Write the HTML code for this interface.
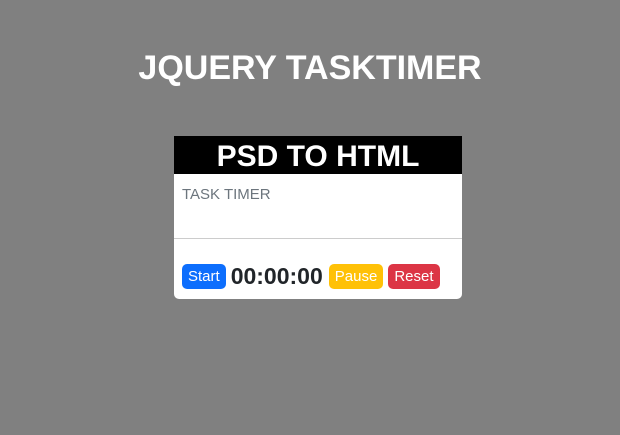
<!DOCTYPE html>
<html><head><style>
body{margin:0;width:620px;height:435px;background:#808080;font-family:"Liberation Sans",sans-serif;position:relative;overflow:hidden}
h1{position:absolute;top:46px;left:0;width:620px;text-align:center;margin:0;color:#fff;font-size:34px;font-weight:bold;line-height:44px}
.card{position:absolute;left:174px;top:136px;width:288px;height:163px;background:#fff;border-radius:0 0 5px 5px}
.hd{height:38px;background:#000;color:#fff;text-align:center;font-size:30px;font-weight:bold;line-height:42px}
.lbl{position:absolute;left:8px;top:50px;color:#6c757d;font-size:15px}
.hr{position:absolute;left:0;right:0;top:102px;border-top:1px solid #ccc}
.row{position:absolute;left:8px;top:127px;display:flex;align-items:center}
.b{color:#fff;font-size:15px;height:25px;line-height:25px;padding:0 6px;border-radius:5px;margin-right:5px}
.t{font-size:23px;font-weight:bold;color:#212529;margin-right:6px;margin-left:0}
</style></head><body>
<h1>JQUERY TASKTIMER</h1>
<div class="card">
<div class="hd">PSD TO HTML</div>
<div class="lbl">TASK TIMER</div>
<div class="hr"></div>
<div class="row"><span class="b" style="background:#0d6efd">Start</span><span class="t">00:00:00</span><span class="b" style="background:#ffc107">Pause</span><span class="b" style="background:#dc3545">Reset</span></div>
</div>
</body></html>
